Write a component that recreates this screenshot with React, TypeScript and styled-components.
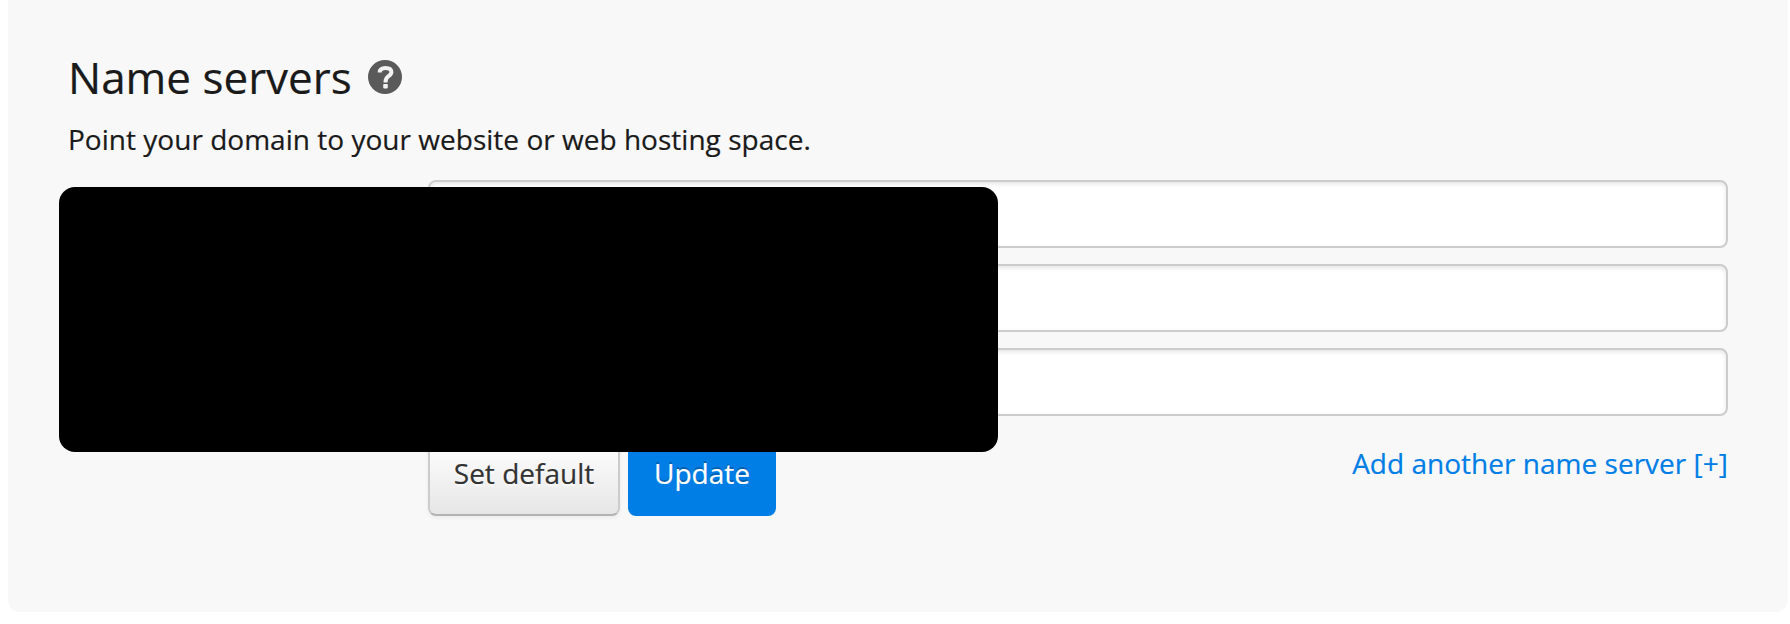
import React from "react";
import styled, { createGlobalStyle } from "styled-components";

const GlobalStyle = createGlobalStyle`
  *, *::before, *::after { box-sizing: border-box; }
  body {
    margin: 0;
    background: #fff;
    color: #1a1a1a;
    font-family: "Open Sans", "Noto Sans", sans-serif;
    font-size: 28px;
    line-height: 40px;
    letter-spacing: 0.02px;
    -webkit-font-smoothing: antialiased;
    -webkit-text-stroke: 0.2px currentColor;
  }
`;

const Panel = styled.section`
  position: relative;
  width: 1780px;
  height: 612px;
  margin-left: 8px;
  padding: 47px 60px 0;
  border-radius: 0 0 12px 12px;
  background: #f8f8f8;
`;

const Heading = styled.header`
  display: flex;
  align-items: center;
  gap: 16px;
  height: 60px;
`;

const Title = styled.h2`
  margin: 0;
  font-size: 44px;
  font-weight: 400;
  line-height: 60px;
  letter-spacing: 0;
`;

const HelpIcon = styled.svg`
  width: 34px;
  height: 34px;
`;

const Intro = styled.p`
  margin: 12px 0 21px;
`;

const Form = styled.form`
  display: flex;
  flex-direction: column;
  gap: 16px;
  padding-left: 360px;
`;

const ServerInput = styled.input`
  width: 100%;
  height: 68px;
  padding: 0 16px;
  border: 2px solid #ccc;
  border-radius: 8px;
  background: #fff;
  box-shadow: inset 0 2px 4px rgba(0, 0, 0, 0.1);
  font: inherit;
`;

const Actions = styled.div`
  display: flex;
  align-items: flex-start;
  gap: 8px;
`;

const Button = styled.button<{ $primary?: boolean }>`
  width: ${(p) => (p.$primary ? 148 : 192)}px;
  height: 84px;
  padding: 0 0 2px;
  border: 2px solid;
  border-color: ${(p) => (p.$primary ? "#007ee5" : "#ccc #ccc #b3b3b3")};
  border-radius: 8px;
  background: ${(p) => (p.$primary ? "#007ee5" : "linear-gradient(#fff, #fafafa 25%, #e6e6e6)")};
  box-shadow: ${(p) => (p.$primary ? "none" : "0 2px 4px rgba(0, 0, 0, 0.05)")};
  color: ${(p) => (p.$primary ? "#fff" : "#333")};
  text-shadow: ${(p) => (p.$primary ? "0 -2px 0 rgba(0, 0, 0, 0.25)" : "0 2px 2px rgba(255, 255, 255, 0.75)")};
  font: inherit;
`;

const AddLink = styled.a`
  margin: 11px 0 0 auto;
  color: #007ee5;
  text-decoration: none;
`;

const Redaction = styled.div`
  position: absolute;
  top: 187px;
  left: 51px;
  width: 939px;
  height: 265px;
  border-radius: 16px;
  background: #000;
`;

export default function App() {
  return (
    <>
      <GlobalStyle />
      <Panel>
        <Heading>
          <Title>Name servers</Title>
          <HelpIcon viewBox="0 0 34 34" role="img" aria-label="Help">
            <circle cx="17" cy="17" r="17" fill="#5a5a5a" />
            <path
              d="M11.7 12.4C11.7 9.2 13.8 7.9 17.5 7.9C21.3 7.9 23.4 9.4 23.4 12C23.4 14 22.3 15 20.2 16.4C18.1 17.9 17.5 19.2 17.5 22.4"
              fill="none"
              stroke="#f2f2f2"
              strokeWidth="4"
            />
            <rect x="15.2" y="24" width="4.6" height="4.4" rx="0.8" fill="#f2f2f2" />
          </HelpIcon>
        </Heading>
        <Intro>Point your domain to your website or web hosting space.</Intro>
        <Form>
          <ServerInput />
          <ServerInput />
          <ServerInput />
          <Actions>
            <Button type="button">Set default</Button>
            <Button type="button" $primary>Update</Button>
            <AddLink>Add another name server [+]</AddLink>
          </Actions>
        </Form>
        <Redaction />
      </Panel>
    </>
  );
}
